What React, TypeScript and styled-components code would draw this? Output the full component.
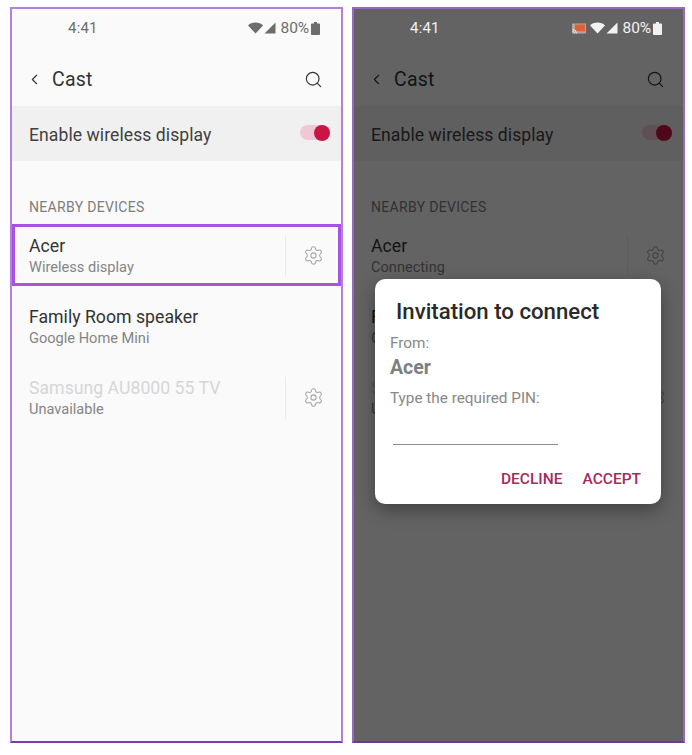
import React from "react";
import styled, { createGlobalStyle } from "styled-components";
import { ChevronLeft, Search, Settings } from "lucide-react";

const Global = createGlobalStyle`
  html, body { margin: 0; padding: 0; background: #fff; }
  body { font-family: Roboto, "Liberation Sans", sans-serif; }
`;

const Page = styled.div`
  width: 692px;
  height: 755px;
  box-sizing: border-box;
  padding: 7px 8px 12px 10px;
  display: flex;
  gap: 9px;
  overflow: hidden;
`;

const Phone = styled.div`
  position: relative;
  flex: 0 0 333px;
  height: 736px;
  box-sizing: border-box;
  border: 2px solid ${(p) => (p.$dim ? "#9a68c0" : "#b47ee2")};
  border-bottom-color: ${(p) => (p.$dim ? "#6a3a90" : "#7a3ea8")};
  background: #fafafa;
  overflow: hidden;
`;

const Scrim = styled.div`
  position: absolute;
  inset: 0;
  background: rgba(0, 0, 0, 0.605);
`;

const StatusBar = styled.div`
  position: relative;
  z-index: 2;
  height: 38px;
  display: flex;
  align-items: center;
  padding: 0 21px 0 56px;
  font-size: 15px;
  letter-spacing: 0.2px;
  color: ${(p) => (p.$dim ? "#f2f2f2" : "#6d6d6d")};
`;

const StatusIcons = styled.div`
  margin-left: auto;
  display: flex;
  align-items: center;
  gap: 1px;
`;

const CastGap = styled.span`
  width: 2px;
`;

const Percent = styled.span`
  margin: 0 1px 0 4px;
  font-size: 15.5px;
  letter-spacing: -0.1px;
`;

const Toolbar = styled.div`
  height: 54px;
  margin-top: 3px;
  padding: 2px 18px 0 14px;
  display: flex;
  align-items: center;
  color: #333;
`;

const ToolbarTitle = styled.div`
  margin-left: 9px;
  font-size: 19.5px;
  flex: 1;
  letter-spacing: 0.2px;
`;

const SwitchBand = styled.div`
  height: 55px;
  box-sizing: border-box;
  padding: 3px 11px 0 17px;
  background: #f0f0f0;
  display: flex;
  align-items: center;
  font-size: 17.6px;
  color: #404040;
  letter-spacing: 0.06px;
  justify-content: space-between;
`;

const Track = styled.div`
  position: relative;
  width: 30px;
  height: 15px;
  margin-top: -5px;
  border-radius: 8px;
  background: #eec9d4;
`;

const Knob = styled.div`
  position: absolute;
  right: 0;
  top: -0.5px;
  width: 16px;
  height: 16px;
  border-radius: 50%;
  background: #cb1444;
`;

const SectionLabel = styled.div`
  height: 60px;
  box-sizing: border-box;
  padding: 38px 0 0 17px;
  font-size: 14px;
  line-height: 17px;
  letter-spacing: 0.32px;
  color: #7d7d7d;
`;

const Row = styled.div`
  position: relative;
  height: 71px;
  box-sizing: border-box;
  display: flex;
  align-items: center;
  padding: 0 0 0 17px;
`;

const Highlight = styled.div`
  position: absolute;
  z-index: 1;
  left: 0;
  right: 0;
  top: 3px;
  height: 62px;
  box-sizing: border-box;
  border: 3px solid #a752e0;
`;

const RowText = styled.div`
  flex: 1;
  display: flex;
  flex-direction: column;
  gap: 1px;
  margin-top: -1px;
`;

const RowTitle = styled.div`
  font-size: 17.7px;
  line-height: 22px;
  color: ${(p) => (p.$muted ? "#d6d6d6" : "#333")};
`;

const RowSub = styled.div`
  font-size: 14.6px;
  line-height: 19px;
  color: #858585;
`;

const RowDivider = styled.div`
  width: 1px;
  height: 42px;
  margin-top: -2px;
  background: #ebebeb;
`;

const GearSlot = styled.div`
  width: 55px;
  margin-top: -2px;
  display: flex;
  justify-content: center;
  color: #a6a6a6;
  box-sizing: border-box;
`;

const Dialog = styled.div`
  position: absolute;
  z-index: 3;
  left: 21px;
  top: 270px;
  width: 286px;
  height: 225px;
  box-sizing: border-box;
  padding: 19px 20px 0 15px;
  background: #fff;
  border-radius: 10px;
  box-shadow: 0 6px 18px rgba(0, 0, 0, 0.35);
  display: flex;
  flex-direction: column;
`;

const DialogTitle = styled.div`
  margin-left: 6px;
  font-size: 22.2px;
  line-height: 26px;
  font-weight: 500;
  color: #2a2a2a;
`;

const DialogText = styled.div`
  margin-top: 10px;
  font-size: 15.3px;
  line-height: 18px;
  color: #878787;
`;

const DialogName = styled.div`
  margin-top: 4px;
  font-size: 19.5px;
  line-height: 24px;
  font-weight: 700;
  color: #7f7f7f;
  & + ${DialogText} {
    margin-top: 9px;
  }
`;

const PinLine = styled.div`
  margin: 37px 0 0 3px;
  width: 165px;
  height: 1px;
  background: #8c8c8c;
`;

const Actions = styled.div`
  margin-top: 25px;
  display: flex;
  justify-content: flex-end;
  gap: 20px;
`;

const ActionButton = styled.div`
  font-size: 15.5px;
  line-height: 19px;
  font-weight: 500;
  color: #a62a5a;
`;

const Wifi = () => (
  <svg width="15" height="12" viewBox="0 0 15 12">
    <path d="M0 3.4C1.9 1.6 4.5.6 7.5.6s5.6 1 7.5 2.8L7.5 11.6z" fill="currentColor" />
  </svg>
);

const Signal = () => (
  <svg width="12" height="12" viewBox="0 0 12 12">
    <path d="M11.5 0.5V11.5H.5z" fill="currentColor" />
  </svg>
);

const Battery = () => (
  <svg width="9" height="13" viewBox="0 0 9 13">
    <path d="M3 0h3v1.4h2.2c.4 0 .8.4.8.8V12.2c0 .4-.4.8-.8.8H.8c-.4 0-.8-.4-.8-.8V2.2c0-.4.4-.8.8-.8H3z" fill="currentColor" />
  </svg>
);

const CastIcon = () => (
  <svg width="14" height="11" viewBox="0 0 14 11">
    <rect x="0" y="0.5" width="14" height="10" fill="#b9a49c" />
    <path d="M3 1.5h10v7l-10-.5z" fill="#e0603a" />
    <path d="M0.5 6.5a4 4 0 0 1 4 4M.5 8.5a2 2 0 0 1 2 2" stroke="#e8e8e8" strokeWidth="1" fill="none" />
  </svg>
);

const Device = ({ title, sub, muted, gear, highlight }: { title: string; sub: string; muted?: boolean; gear?: boolean; highlight?: boolean }) => (
  <Row>
    {highlight && <Highlight />}
    <RowText>
      <RowTitle $muted={muted}>{title}</RowTitle>
      <RowSub>{sub}</RowSub>
    </RowText>
    {gear && (
      <>
        <RowDivider />
        <GearSlot>
          <Settings size={21} strokeWidth={1.2} />
        </GearSlot>
      </>
    )}
  </Row>
);

const Screen = ({ dim }: { dim?: boolean }) => (
  <Phone $dim={dim}>
    <StatusBar $dim={dim}>
      4:41
      <StatusIcons>
        {dim && <CastIcon />}
        {dim && <CastGap />}
        <Wifi />
        <Signal />
        <Percent>80%</Percent>
        <Battery />
      </StatusIcons>
    </StatusBar>
    <Toolbar>
      <ChevronLeft size={17} strokeWidth={1.6} />
      <ToolbarTitle>Cast</ToolbarTitle>
      <Search size={19} strokeWidth={1.5} />
    </Toolbar>
    <SwitchBand>
      Enable wireless display
      <Track>
        <Knob />
      </Track>
    </SwitchBand>
    <SectionLabel>NEARBY DEVICES</SectionLabel>
    <Device title="Acer" sub={dim ? "Connecting" : "Wireless display"} gear highlight={!dim} />
    <Device title="Family Room speaker" sub="Google Home Mini" />
    <Device title="Samsung AU8000 55 TV" sub="Unavailable" muted gear />
    {dim && (
      <>
        <Scrim />
        <Dialog>
          <DialogTitle>Invitation to connect</DialogTitle>
          <DialogText>From:</DialogText>
          <DialogName>Acer</DialogName>
          <DialogText>Type the required PIN:</DialogText>
          <PinLine />
          <Actions>
            <ActionButton>DECLINE</ActionButton>
            <ActionButton>ACCEPT</ActionButton>
          </Actions>
        </Dialog>
      </>
    )}
  </Phone>
);

export default function App() {
  return (
    <>
      <Global />
      <Page>
        <Screen />
        <Screen dim />
      </Page>
    </>
  );
}
